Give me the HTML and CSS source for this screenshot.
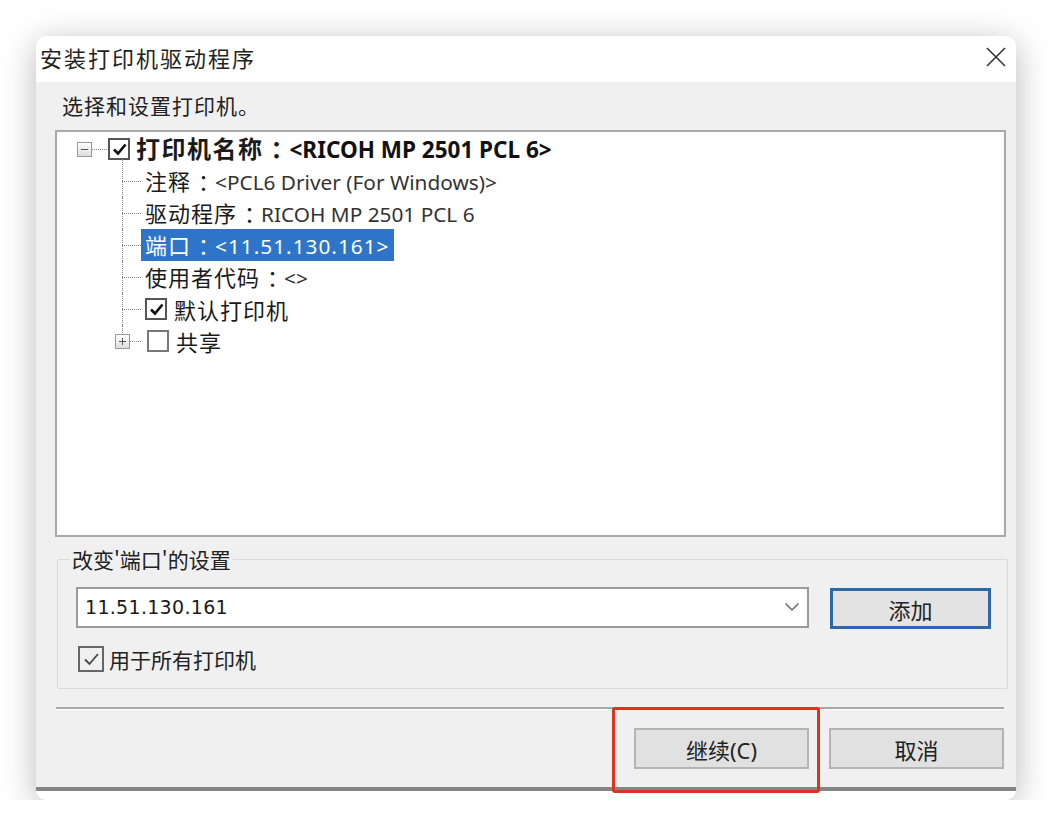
FILE: index.html
```html
<!DOCTYPE html>
<html lang="zh-CN">
<head>
  <meta charset="UTF-8">
  <title>安装打印机驱动程序</title>
  <link rel="stylesheet" href="styles.css">
</head>
<body>

<div class="window">
  <div class="titlebar">
    <span class="title">安装打印机驱动程序</span>
    <svg class="close" width="22" height="22" viewBox="0 0 22 22">
      <path d="M2 2 L20 20 M20 2 L2 20" stroke="#333" stroke-width="1.6" fill="none"/>
    </svg>
  </div>

  <div class="content">
    <div class="intro">选择和设置打印机。</div>

    <div class="tree">
      <div class="row root">
        <span class="exp"><span class="minus"></span></span>
        <span class="hdots"></span>
        <span class="cb checked">
          <svg width="17" height="17" viewBox="0 0 17 17"><path d="M3 8.5 L7 12.5 L14.5 3.5" stroke="#111" stroke-width="2.6" fill="none"/></svg>
        </span>
        <span class="label bold">打印机名称<span class="colon">：</span><span class="latin">&lt;RICOH MP 2501 PCL 6&gt;</span></span>
      </div>

      <div class="children">
        <div class="row child">
          <span class="conn"></span>
          <span class="label">注释<span class="colon">：</span><span class="latin">&lt;PCL6 Driver (For Windows)&gt;</span></span>
        </div>
        <div class="row child">
          <span class="conn"></span>
          <span class="label">驱动程序<span class="colon">：</span><span class="latin">RICOH MP 2501 PCL 6</span></span>
        </div>
        <div class="row child">
          <span class="conn"></span>
          <span class="label selected">端口<span class="colon">：</span><span class="latin">&lt;11.51.130.161&gt;</span></span>
        </div>
        <div class="row child">
          <span class="conn"></span>
          <span class="label">使用者代码<span class="colon">：</span><span class="latin">&lt;&gt;</span></span>
        </div>
        <div class="row child">
          <span class="conn"></span>
          <span class="cb checked small">
            <svg width="17" height="17" viewBox="0 0 17 17"><path d="M3 8.5 L7 12.5 L14.5 3.5" stroke="#111" stroke-width="2.6" fill="none"/></svg>
          </span>
          <span class="label tight">默认打印机</span>
        </div>
        <div class="row child last">
          <span class="conn"><span class="exp plus"><span class="minus"></span><span class="vbar"></span></span></span>
          <span class="cb small gap"></span>
          <span class="label tight">共享</span>
        </div>
      </div>
    </div>

    <fieldset class="group">
      <legend>改变'端口'的设置</legend>
      <div class="port-row">
        <div class="combo">
          <span class="combo-value">11.51.130.161</span>
          <svg class="chevron" width="16" height="10" viewBox="0 0 16 10">
            <path d="M1.5 1.5 L8 8 L14.5 1.5" stroke="#666" stroke-width="1.5" fill="none"/>
          </svg>
        </div>
        <button class="btn btn-default">添加</button>
      </div>
      <label class="check-row">
        <span class="cb-flat">
          <svg width="19" height="19" viewBox="0 0 19 19"><path d="M3 9.5 L7.5 14 L16 4" stroke="#444" stroke-width="1.8" fill="none"/></svg>
        </span>
        <span>用于所有打印机</span>
      </label>
    </fieldset>

    <div class="separator"></div>

    <div class="actions">
      <div class="btn-wrap">
        <button class="btn">继续(C)</button>
        <span class="mark"></span>
      </div>
      <button class="btn">取消</button>
    </div>
  </div>
</div>

</body>
</html>
```

FILE: styles.css
```css
* {
  box-sizing: border-box;
  margin: 0;
  padding: 0;
}

body {
  background: #fff;
  font-family: "Noto Sans CJK SC", sans-serif;
  color: #1c1c1c;
}

.window {
  width: 980px;
  height: 764px;
  margin: 36px 0 0 36px;
  background: #fff;
  border-radius: 10px;
  box-shadow: 0 6px 34px rgba(0, 0, 0, 0.28);
  display: flex;
  flex-direction: column;
}

.titlebar {
  height: 46px;
  padding: 0 9px 4px 4px;
  display: flex;
  align-items: center;
  justify-content: space-between;
}

.title {
  font-size: 22px;
  letter-spacing: 2px;
  color: #222;
}

.content {
  flex: 1;
  background: #f0f0f0;
  border-bottom: 4px solid #858585;
  margin-bottom: 9px;
  padding: 0 10px 0 19px;
  display: flex;
  flex-direction: column;
}

.intro {
  height: 48px;
  padding-left: 7px;
  padding-bottom: 2px;
  display: flex;
  align-items: center;
  font-size: 21px;
  letter-spacing: 1px;
  color: #222;
}

/* tree view */
.tree {
  height: 407px;
  background: #fff;
  border: 2px solid #a9a9a9;
  padding: 1px 0 0 20px;
}

.row {
  height: 32px;
  display: flex;
  align-items: center;
  font-size: 22px;
  letter-spacing: 1px;
  color: #1a1a1a;
}

.exp {
  width: 15px;
  height: 15px;
  border: 1px solid #999;
  background: linear-gradient(#fff, #dedede);
  position: relative;
  flex-shrink: 0;
}

.exp .minus {
  position: absolute;
  left: 3px;
  right: 3px;
  top: 6px;
  border-top: 1px solid #555;
}

.exp .vbar {
  position: absolute;
  top: 3px;
  bottom: 3px;
  left: 6px;
  border-left: 1px solid #555;
}

.hdots {
  width: 15px;
  border-top: 1px dotted #888;
}

.cb {
  width: 22px;
  height: 22px;
  border: 2px solid #555;
  background: #fff;
  display: flex;
  align-items: center;
  justify-content: center;
  flex-shrink: 0;
  margin-left: 1px;
}

.cb.small {
  margin-left: 4px;
}

.cb.small.gap {
  margin-left: 6px;
  border-color: #777;
}

.label {
  padding: 0 4px;
  line-height: 30px;
  white-space: nowrap;
}

.label.bold {
  font-weight: bold;
  font-size: 24px;
  letter-spacing: 1.5px;
  padding-left: 6px;
}

.label.tight {
  padding-left: 7px;
}

.colon {
  padding-left: 7px;
  letter-spacing: -5px;
}

.latin {
  font-family: "Noto Sans", "Noto Sans CJK SC", sans-serif;
  font-size: 20.8px;
  letter-spacing: 0;
  color: #333;
}

.bold .latin {
  font-size: 22.5px;
  color: #111;
}

.selected {
  background: #2e74c8;
  color: #fff;
}

.selected .latin {
  color: #fff;
  letter-spacing: 1px;
}

.children {
  margin-left: 45px;
}

.conn {
  width: 19px;
  align-self: stretch;
  position: relative;
  flex-shrink: 0;
}

.conn::before {
  content: "";
  position: absolute;
  left: 0;
  top: 0;
  bottom: 0;
  border-left: 1px dotted #888;
}

.conn::after {
  content: "";
  position: absolute;
  left: 0;
  right: 0;
  top: 50%;
  border-top: 1px dotted #888;
}

.children .row:first-child .conn::before {
  top: -6px;
}

.last .conn::before {
  bottom: 50%;
}

.conn .exp {
  position: absolute;
  left: -7px;
  top: 9px;
  z-index: 1;
}

/* port group */
.group {
  margin: 10px -2px 0 2px;
  border: 1px solid #dadada;
  border-radius: 2px;
  padding: 14px 16px 14px 18px;
  min-width: 0;
}

.group legend {
  margin-left: -6px;
  padding: 0 2px;
  font-size: 21px;
  line-height: 24px;
  color: #222;
}

.port-row {
  display: flex;
  align-items: center;
  gap: 21px;
}

.combo {
  flex: 1;
  height: 41px;
  background: #fff;
  border: 2px solid #9a9a9a;
  display: flex;
  align-items: center;
  justify-content: space-between;
  padding: 0 7px 0 7px;
}

.combo-value {
  font-family: "DejaVu Sans", sans-serif;
  font-size: 19px;
  letter-spacing: 0.3px;
  color: #1a1a1a;
}

.btn {
  width: 175px;
  height: 41px;
  background: #e1e1e1;
  border: 2px solid #b4b4b4;
  font-family: "Noto Sans", "Noto Sans CJK SC", sans-serif;
  font-size: 22px;
  color: #222;
}

.btn-default {
  width: 161px;
  margin-top: 3px;
  border: 3px solid #2c69a8;
  background: #e3e3e3;
}

.check-row {
  display: flex;
  align-items: center;
  margin-top: 15px;
  padding-left: 2px;
  font-size: 21px;
  color: #222;
}

.cb-flat {
  width: 26px;
  height: 26px;
  border: 2px solid #666;
  display: flex;
  align-items: center;
  justify-content: center;
  margin-right: 5px;
}

.separator {
  margin: 18px 2px 0 1px;
  border-top: 2px solid #a8a8a8;
  border-bottom: 1px solid #fff;
}

.actions {
  display: flex;
  justify-content: flex-end;
  gap: 20px;
  padding-top: 18px;
  margin-right: 2px;
}

.btn-wrap {
  position: relative;
}

.mark {
  position: absolute;
  left: -22px;
  top: -21px;
  width: 208px;
  height: 86px;
  border: 3px solid #e2301f;
  border-radius: 3px;
}
```
